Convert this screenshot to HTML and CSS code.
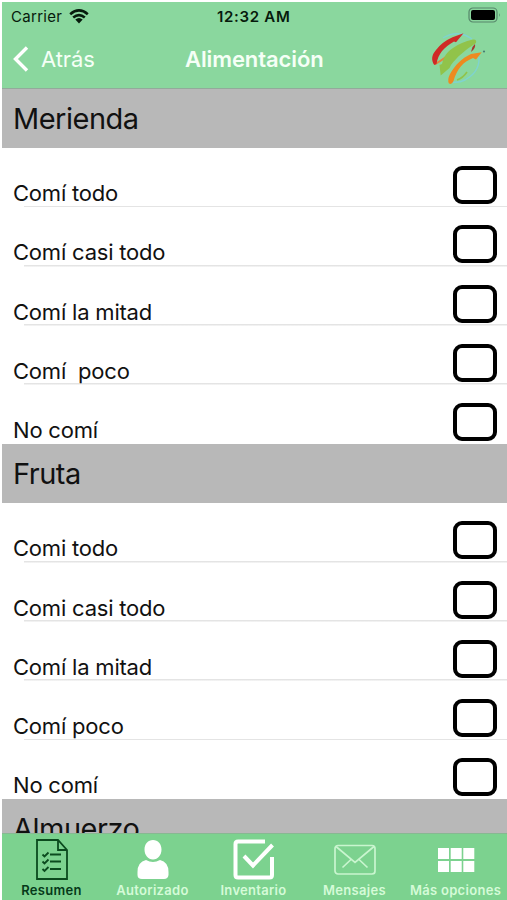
FILE: index.html
```html
<!DOCTYPE html>
<html lang="es">
<head>
    <meta charset="UTF-8">
    <title>Alimentación</title>
    <link rel="stylesheet" href="styles.css">
</head>
<body>
<div id="app">
    <div id="header">
        <div class="status">
            <span class="carrier">Carrier</span>
            <svg class="wifi" width="20" height="15" viewBox="0 0 20 15">
                <path d="M1.2 5.2Q10-2.4 18.8 5.2M4.2 8.6Q10 3.8 15.8 8.6" fill="none" stroke="#061a0c" stroke-width="2.6"/>
                <path d="M6.3 10.6Q10 7.6 13.7 10.6L10 14.6z" fill="#061a0c"/>
            </svg>
            <span class="time">12:32 AM</span>
            <svg class="battery" width="33" height="16" viewBox="0 0 33 16">
                <rect x="1" y="1" width="28" height="14" rx="4" fill="none" stroke="#56866a" stroke-width="1.2"/>
                <rect x="3" y="3" width="24" height="10" rx="2" fill="#000"/>
                <path d="M31 6q1.6 2 0 4z" fill="#56866a"/>
            </svg>
        </div>
        <div class="nav">
            <svg class="back" width="16" height="26" viewBox="0 0 16 26">
                <path d="M14 1.5L2.5 13L14 24.5" fill="none" stroke="#fff" stroke-width="3.4"/>
            </svg>
            <span class="back-text">Atrás</span>
            <h1>Alimentación</h1>
            <svg class="logo" width="56" height="56" viewBox="0 0 56 56">
                <path d="M13 7Q28-2 42 8M49 26Q50 41 35 49Q29 52 22 51" fill="none" stroke="#7fd3d0" stroke-width="1.4"/>
                <path d="M5 33Q11 30 20 23" fill="none" stroke="#e5843c" stroke-width="2"/>
                <path d="M4.3 34C1 29 1.5 24 6 19Q12 11 22.5 6.3L33.5 2.3L26 11.3L24 10.5C14 16 8 23 6.5 33z" fill="#cf2a27"/>
                <path d="M43 8.5Q47 8 46 12C35 19 27 26 21 34L19.5 37L10.7 44.5L9.5 34L12 33C14 25 17 21 23 17Q31 11 43 8.5z" fill="#91c34a"/>
                <path d="M45 13Q46 17 41 21L42.5 16z" fill="#a6352c"/>
                <path d="M19 52.5Q17 49 20 43C25 34 32 27 41 23L51.7 21.3L46 28.5L43 27C33 31 27 38 23.5 50Q22 54 19 52.5z" fill="#ed8a20"/>
                <path d="M27 49Q33 47 37 41" fill="none" stroke="#91c34a" stroke-width="1.6"/>
                <circle cx="54" cy="20.5" r="1.1" fill="#497b75"/>
            </svg>
        </div>
    </div>
    <div id="list">
        <h2>Merienda</h2>
        <ul>
            <li><span>Comí todo</span><i class="check"></i></li>
            <li><span>Comí casi todo</span><i class="check"></i></li>
            <li><span>Comí la mitad</span><i class="check"></i></li>
            <li><span>Comí&nbsp; poco</span><i class="check"></i></li>
            <li><span>No comí</span><i class="check"></i></li>
        </ul>
        <h2>Fruta</h2>
        <ul>
            <li><span>Comi todo</span><i class="check"></i></li>
            <li><span>Comi casi todo</span><i class="check"></i></li>
            <li><span>Comí la mitad</span><i class="check"></i></li>
            <li><span>Comí poco</span><i class="check"></i></li>
            <li><span>No comí</span><i class="check"></i></li>
        </ul>
        <h2>Almuerzo</h2>
    </div>
    <div id="tab-bar">
        <div class="tab active">
            <svg width="44" height="44" viewBox="0 0 44 44">
                <g fill="none" stroke="#0b4a1e" stroke-width="1.8">
                    <path d="M7 3H28L37 13V42H7zM28 3V13H37M20 17.5H31M20 24.5H31M20 32H31"/>
                    <path d="M12.5 17.5l2 2l4-4M12.5 24.5l2 2l4-4M12.5 32l2 2l4-4"/>
                </g>
            </svg>
            <span>Resumen</span>
        </div>
        <div class="tab">
            <svg width="44" height="44" viewBox="0 0 44 44">
                <path d="M22 3C27 3 30.5 7 30.5 12.5C30.5 18 27 22.5 22 22.5S13.5 18 13.5 12.5C13.5 7 17 3 22 3zM15 23Q22 27 29 23Q37.5 25 37.5 35V38Q37 42 33 42H11Q6.5 42 6.5 38V35Q6.5 25 15 23z" fill="#fff"/>
            </svg>
            <span>Autorizado</span>
        </div>
        <div class="tab">
            <svg width="44" height="44" viewBox="0 0 44 44">
                <path d="M33 4.5H6Q3.5 4.5 3.5 7V38Q3.5 40.5 6 40.5H37.5Q40 40.5 40 38V20M12 19L21 28.5L40.5 8" fill="none" stroke="#fff" stroke-width="4"/>
            </svg>
            <span>Inventario</span>
        </div>
        <div class="tab">
            <svg width="44" height="44" viewBox="0 0 44 44">
                <g fill="none" stroke="#c9f5cf" stroke-width="1.7">
                    <rect x="2" y="8.5" width="40" height="28.5" rx="3"/>
                    <path d="M3 9.5L22 25.5L41 9.5M9.5 30.5L18 22.5M34.5 30.5L26 22.5"/>
                </g>
            </svg>
            <span>Mensajes</span>
        </div>
        <div class="tab">
            <svg width="44" height="44" viewBox="0 0 44 44">
                <path d="M4 11h11v11H4zM16.7 11h11v11h-11zM29.3 11h11v11h-11zM4 24h11v11H4zM16.7 24h11v11h-11zM29.3 24h11v11h-11z" fill="#fff"/>
            </svg>
            <span>Más opciones</span>
        </div>
    </div>
</div>
</body>
</html>
```
FILE: styles.css
```css
* {
    margin: 0;
    padding: 0;
    list-style: none;
    box-sizing: border-box;
}

body {
    background-color: #fff;
    font-family: Inter, "Liberation Sans", sans-serif;
    color: #111;
}

#app {
    display: flex;
    flex-direction: column;
    height: 900px;
    padding: 2px 0 0 2px;
    overflow: hidden;
}

#header {
    flex: none;
    height: 87px;
    background-color: #8ad79e;
    border-bottom: 1px solid #93aa9b;
}

.status {
    display: flex;
    align-items: center;
    height: 28px;
    padding: 0 6px 0 9px;
    font-size: 15px;
    color: #061a0c;
}

.carrier {
    width: 52px;
    letter-spacing: 0.3px;
}

.wifi {
    margin-left: 6px;
}

.time {
    margin-left: 128px;
    font-weight: 600;
    letter-spacing: 0.7px;
    white-space: nowrap;
}

.battery {
    margin: -2px 0 0 auto;
}

.nav {
    display: grid;
    grid-template-columns: 16px 120px 1fr 56px;
    align-items: center;
    height: 58px;
    padding: 0 21px 0 11px;
    color: #f5fff6;
}

.back-text {
    padding-left: 12px;
    font-size: 22px;
    letter-spacing: -0.1px;
}

h1 {
    padding-left: 36px;
    font-size: 22px;
    font-weight: 600;
    letter-spacing: -0.1px;
}

#list {
    flex: 1;
    min-height: 0;
    overflow: hidden;
}

h2 {
    height: 59.2px;
    padding-left: 11px;
    background-color: #b8b8b8;
    font-size: 29px;
    font-weight: 400;
    line-height: 59px;
    letter-spacing: -0.5px;
}

#list li {
    display: flex;
    justify-content: space-between;
    height: 59.2px;
    padding: 18px 10px 0 11px;
    background: linear-gradient(#e4e4e4, #e4e4e4) 22px 100% / 100% 1.5px no-repeat;
    font-size: 22px;
    line-height: 54px;
    letter-spacing: -0.2px;
}

#list li:last-child {
    background: none;
}

.check {
    width: 44px;
    height: 38px;
    border: 4px solid #000;
    border-radius: 9px;
}

#tab-bar {
    flex: none;
    display: grid;
    grid-template-columns: repeat(5, 1fr);
    height: 67px;
    border-top: 1px solid #87b892;
    background-color: #7cd28f;
}

.tab {
    display: flex;
    flex-direction: column;
    align-items: center;
    padding: 3px 2px 0 0;
    font-size: 13px;
    font-weight: 600;
    line-height: 19px;
    letter-spacing: 0.3px;
    color: #d5fbd8;
    white-space: nowrap;
}

.tab.active {
    color: #06391a;
}
```
